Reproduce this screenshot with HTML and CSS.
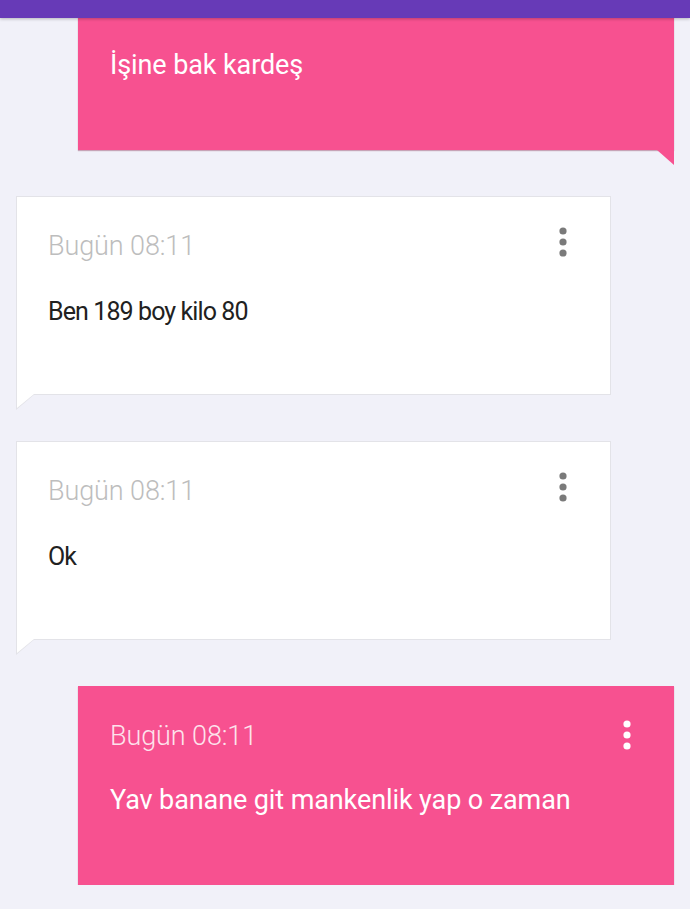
FILE: index.html
```html
<!DOCTYPE html>
<html lang="tr">
<head>
    <meta charset="UTF-8">
    <meta name="viewport" content="width=device-width, initial-scale=1.0">
    <title>Mesajlar</title>
    <link rel="stylesheet" href="styles.css">
</head>
<body>
    <div class="topbar"></div>

    <div class="chat">
        <div class="bubble mine">
            <div class="meta">
                <span class="time"></span>
                <svg class="dots" width="8" height="30" viewBox="0 0 8 30"><circle cx="4" cy="4" r="3.6"/><circle cx="4" cy="15" r="3.6"/><circle cx="4" cy="26" r="3.6"/></svg>
            </div>
            <p class="text">İşine bak kardeş</p>
        </div>

        <div class="bubble theirs">
            <div class="meta">
                <span class="time">Bugün 08:11</span>
                <svg class="dots" width="8" height="30" viewBox="0 0 8 30"><circle cx="4" cy="4" r="3.6"/><circle cx="4" cy="15" r="3.6"/><circle cx="4" cy="26" r="3.6"/></svg>
            </div>
            <p class="text">Ben 189 boy kilo 80</p>
        </div>

        <div class="bubble theirs">
            <div class="meta">
                <span class="time">Bugün 08:11</span>
                <svg class="dots" width="8" height="30" viewBox="0 0 8 30"><circle cx="4" cy="4" r="3.6"/><circle cx="4" cy="15" r="3.6"/><circle cx="4" cy="26" r="3.6"/></svg>
            </div>
            <p class="text">Ok</p>
        </div>

        <div class="bubble mine">
            <div class="meta">
                <span class="time">Bugün 08:11</span>
                <svg class="dots" width="8" height="30" viewBox="0 0 8 30"><circle cx="4" cy="4" r="3.6"/><circle cx="4" cy="15" r="3.6"/><circle cx="4" cy="26" r="3.6"/></svg>
            </div>
            <p class="text">Yav banane git mankenlik yap o zaman</p>
        </div>
    </div>
</body>
</html>
```

FILE: styles.css
```css
body {
    margin: 0;
    font-family: Roboto, "Noto Sans", sans-serif;
    background: #f1f1f9;
    overflow: hidden;
}
.topbar {
    position: fixed;
    top: 0;
    left: 0;
    right: 0;
    height: 18px;
    background: #673ab7;
    box-shadow: 0 1px 3px rgba(0, 0, 0, 0.25);
    z-index: 10;
}
.chat {
    margin-top: -49px;
    display: flex;
    flex-direction: column;
    gap: 46px;
}
.bubble {
    position: relative;
    padding: 34px 43px 69px 32px;
}
.bubble.theirs {
    margin: 0 79px 0 16px;
    background: #fff;
    border: 1px solid #e3e3e8;
    padding-top: 33px;
    padding-bottom: 66px;
    padding-left: 31px;
}
.bubble.mine {
    margin: 0 16px 0 78px;
    background: #f75190;
    box-shadow: 0 1px 1px rgba(120, 20, 60, 0.35);
}
.meta {
    display: flex;
    justify-content: space-between;
    align-items: flex-start;
    height: 32px;
}
.time {
    font-size: 27px;
    line-height: 32px;
    font-weight: 300;
    letter-spacing: -0.1px;
    color: #bdbdbd;
}
.mine .time {
    color: #fde3ec;
}
.dots {
    margin-top: -3px;
    fill: #7a7a7a;
}
.mine .dots {
    margin-top: 0;
    fill: #fff;
}
.text {
    margin: 34px 0 0;
    font-size: 25px;
    line-height: 32px;
    letter-spacing: -0.9px;
    color: #212121;
}
.mine .text {
    margin-top: 32px;
    font-size: 27px;
    letter-spacing: -0.1px;
    color: #fff;
}
/* speech bubble tails */
.theirs::before,
.theirs::after {
    content: "";
    position: absolute;
    top: 100%;
    clip-path: polygon(0 0, 100% 0, 0 100%);
}
.theirs::before {
    left: -1px;
    width: 19px;
    height: 16px;
    background: #e3e3e8;
}
.theirs::after {
    left: 0;
    width: 17px;
    height: 14px;
    background: #fff;
}
.mine::after {
    content: "";
    position: absolute;
    top: 100%;
    right: 0;
    width: 17px;
    height: 15px;
    background: #f75190;
    clip-path: polygon(0 0, 100% 0, 100% 100%);
}
```
